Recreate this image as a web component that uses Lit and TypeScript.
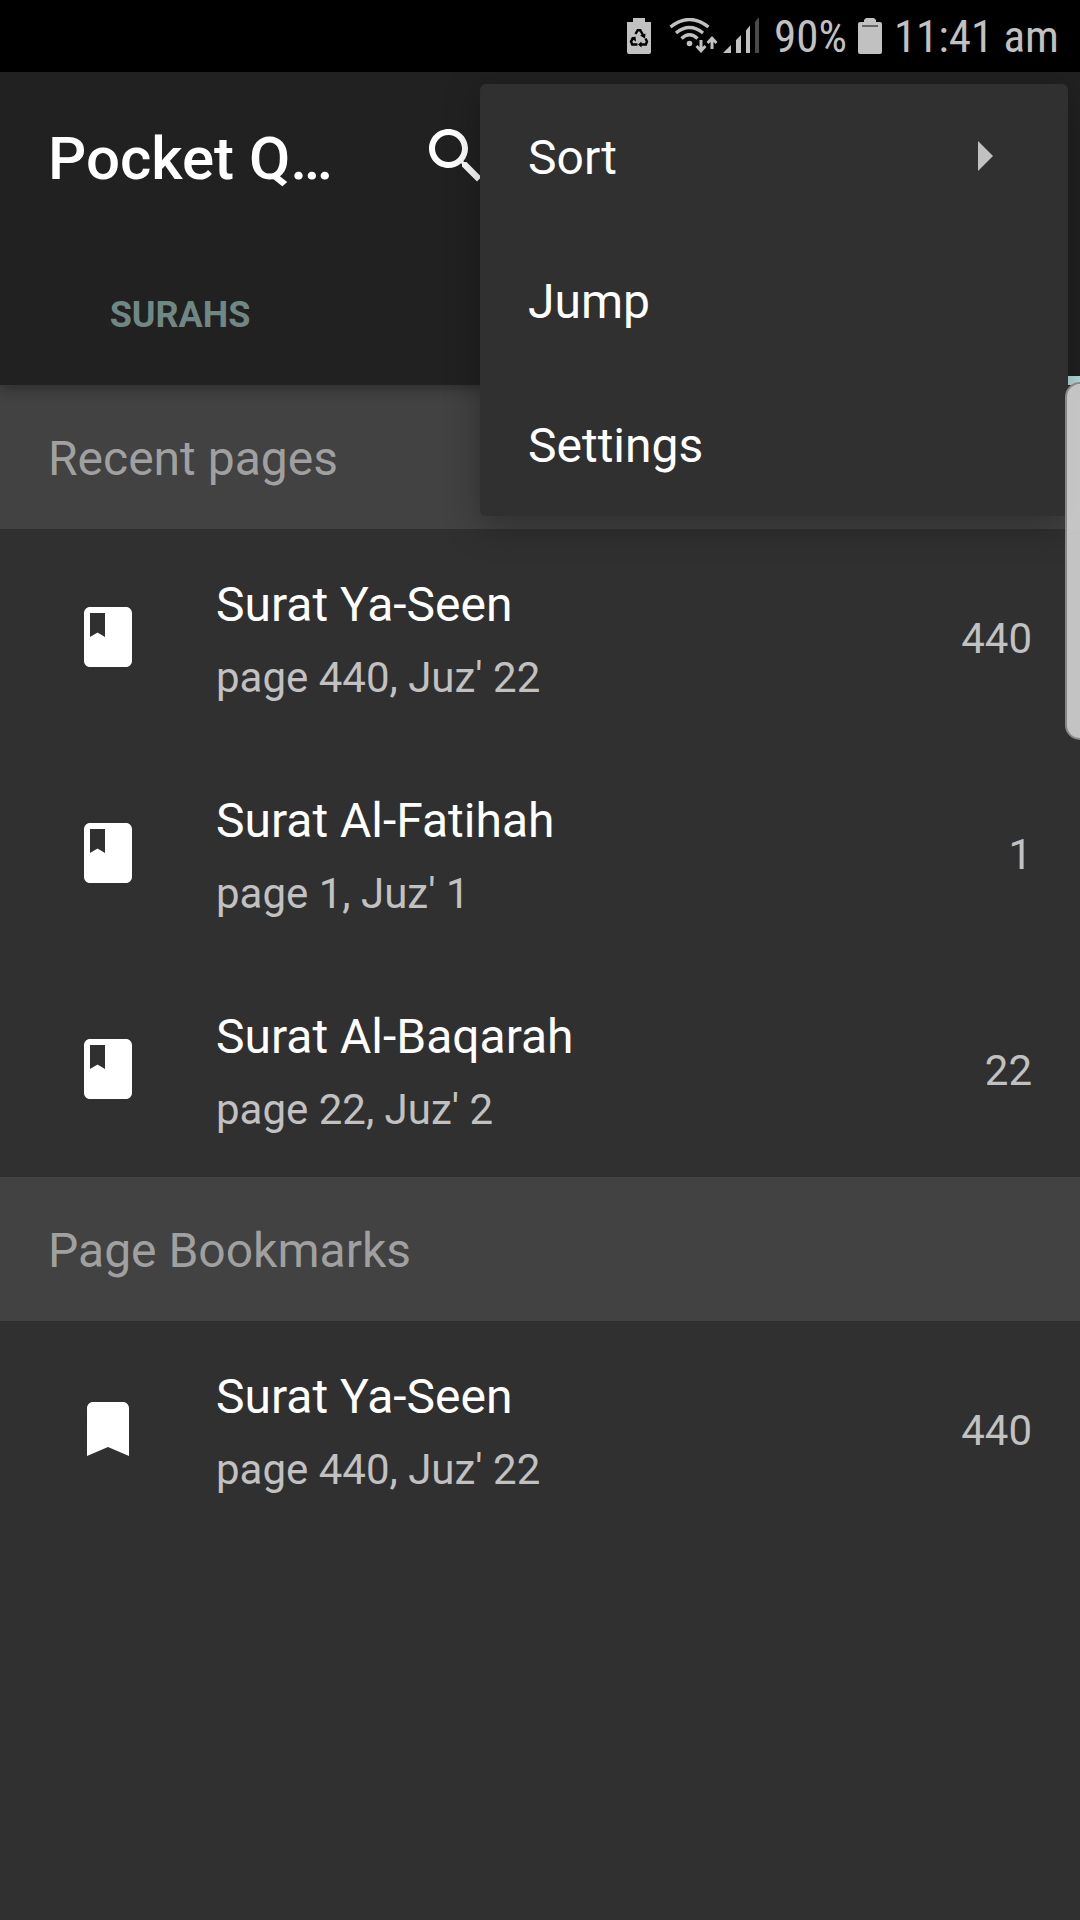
import { LitElement, html, css, svg } from "lit";
import { customElement, property } from "lit/decorators.js";

type Kind = "page" | "bookmark";

interface Entry {
  kind: Kind;
  title: string;
  detail: string;
  page: number;
}

interface Section {
  heading: string;
  entries: Entry[];
}

const SECTIONS: Section[] = [
  {
    heading: "Recent pages",
    entries: [
      { kind: "page", title: "Surat Ya-Seen", detail: "page 440, Juz' 22", page: 440 },
      { kind: "page", title: "Surat Al-Fatihah", detail: "page 1, Juz' 1", page: 1 },
      { kind: "page", title: "Surat Al-Baqarah", detail: "page 22, Juz' 2", page: 22 },
    ],
  },
  {
    heading: "Page Bookmarks",
    entries: [{ kind: "bookmark", title: "Surat Ya-Seen", detail: "page 440, Juz' 22", page: 440 }],
  },
];

const ICONS = {
  page: svg`<path d="M18 2H6c-1.1 0-2 .9-2 2v16c0 1.1.9 2 2 2h12c1.1 0 2-.9 2-2V4c0-1.1-.9-2-2-2zM6 4h5v8l-2.5-1.5L6 12V4z"/>`,
  bookmark: svg`<path d="M17 3H7c-1.1 0-1.99.9-1.99 2L5 21l7-3 7 3V5c0-1.1-.9-2-2-2z"/>`,
  search: svg`<path d="M15.5 14h-.79l-.28-.27C15.41 12.59 16 11.11 16 9.5 16 5.91 13.09 3 9.5 3S3 5.91 3 9.5 5.91 16 9.5 16c1.61 0 3.09-.59 4.23-1.57l.27.28v.79l5 4.99L20.49 19l-4.99-5zm-6 0C7.01 14 5 11.99 5 9.5S7.01 5 9.5 5 14 7.01 14 9.5 11.99 14 9.5 14z"/>`,
  arrow: svg`<path d="M10 17l5-5-5-5v10z"/>`,
};

const icon = (name: keyof typeof ICONS) => html`
  <svg class="icon" viewBox="0 0 24 24" aria-hidden="true">${ICONS[name]}</svg>
`;

const iconStyles = css`
  .icon {
    display: block;
    flex: none;
    width: 72px;
    height: 72px;
    fill: currentColor;
  }
  button {
    border: 0;
    margin: 0;
    padding: 0;
    background: none;
    color: inherit;
    font: inherit;
    text-align: left;
    cursor: pointer;
  }
`;

@customElement("status-bar")
export class StatusBar extends LitElement {
  static styles = css`
    :host {
      display: flex;
      align-items: center;
      justify-content: flex-end;
      height: 72px;
      padding: 0 21px;
      background: #000;
      color: #c1c1c1;
      font-family: "Roboto Condensed", "Liberation Sans Narrow", Roboto, sans-serif;
      font-size: 45px;
      line-height: 68px;
      white-space: nowrap;
    }
    span {
      padding-top: 2px;
    }
    svg {
      display: block;
      flex: none;
      fill: currentColor;
    }
    .saver {
      margin-right: 18px;
    }
    .signal {
      margin-right: 14px;
    }
    .battery {
      margin: 0 12px 0 11px;
    }
  `;

  render() {
    return html`
      <svg class="saver" width="24" height="36" viewBox="0 0 24 36" aria-hidden="true">
        <path d="M6 0h12v4h6v30a2 2 0 0 1-2 2H2a2 2 0 0 1-2-2V4h6z" />
        <g fill="none" stroke="#000" stroke-width="2.4">
          <path d="M8.5 16l2.2-3.800h2.600l2.700 4.800" />
          <path d="M18.500 20.500l1.500 3-1.200 3H14" />
          <path d="M10.500 26.500H5.200L4 23.500l2.600-4" />
        </g>
        <path d="M13 17.500l5.500-2-.5 5zM14.500 23.500v6l-3.500-3zM3.500 20l5-1.500.5 5z" fill="#000" />
      </svg>
      <svg class="signal" width="91" height="36" viewBox="0 0 91 36" aria-hidden="true">
        <g fill="none" stroke="currentColor" stroke-width="3.4">
          <path d="M1.500 9Q20.500-6 39.500 9" />
          <path d="M7 15Q20.500 4 34 15" />
          <path d="M12.500 20.500Q20.500 13 28.500 20.500" />
        </g>
        <circle cx="20.500" cy="25.500" r="2.8" />
        <path d="M30.500 22h3v7l2-2 2 2-5.500 6-5.500-6 2-2 2 2zM41.500 31h3v-7l2 2 2-2-5.500-6-5.500 6 2 2 2-2z" />
        <path d="M54 35l8-8v8zM67 22l5-5v18h-5zM77 12.500l4-5V35h-4z" />
        <path d="M86 4l4-5V35h-4z" fill="#4a4a4a" />
      </svg>
      <span>90%</span>
      <svg class="battery" width="24" height="36" viewBox="0 0 24 36" aria-hidden="true">
        <path d="M8 0h8l2 2v2h4a2 2 0 0 1 2 2v28a2 2 0 0 1-2 2H2a2 2 0 0 1-2-2V6a2 2 0 0 1 2-2h4V2z" />
        <path d="M4 7h16v2H4z" fill="#666" />
      </svg>
      <span>11:41 am</span>
    `;
  }
}

@customElement("page-entry")
export class PageEntry extends LitElement {
  @property({ attribute: false }) entry!: Entry;

  static styles = [
    iconStyles,
    css`
      :host {
        display: block;
      }
      .row {
        display: flex;
        align-items: center;
        width: 100%;
        min-height: 216px;
        padding: 0 48px 0 72px;
      }
      .text {
        display: flex;
        flex: 1;
        flex-direction: column;
        min-width: 0;
        padding: 8px 0 0 72px;
      }
      .title {
        font-size: 48px;
        line-height: 74px;
        color: #fff;
      }
      .detail,
      .page {
        font-size: 42px;
        line-height: 72px;
        color: #c1c1c1;
      }
      .page {
        padding-top: 4px;
      }
    `,
  ];

  render() {
    const { kind, title, detail, page } = this.entry;
    return html`
      <button class="row" type="button">
        ${icon(kind)}
        <span class="text">
          <span class="title">${title}</span>
          <span class="detail">${detail}</span>
        </span>
        <span class="page">${page}</span>
      </button>
    `;
  }
}

@customElement("overflow-menu")
export class OverflowMenu extends LitElement {
  static styles = [
    iconStyles,
    css`
      :host {
        display: block;
        border-radius: 6px;
        background: #303030;
        box-shadow: 0 10px 36px rgba(0, 0, 0, 0.3);
        color: #fff;
      }
      .item {
        display: flex;
        align-items: center;
        justify-content: space-between;
        width: 100%;
        height: 144px;
        padding: 0 48px;
        font-size: 48px;
        line-height: 56px;
      }
      .label {
        padding-top: 4px;
      }
      .icon {
        color: #c1c1c1;
      }
    `,
  ];

  render() {
    return html`
      <div role="menu">
        <button class="item" type="button" role="menuitem" aria-haspopup="true">
          <span class="label">Sort</span>${icon("arrow")}
        </button>
        <button class="item" type="button" role="menuitem"><span class="label">Jump</span></button>
        <button class="item" type="button" role="menuitem"><span class="label">Settings</span></button>
      </div>
    `;
  }
}

@customElement("app-root")
export class AppRoot extends LitElement {
  static styles = [
    iconStyles,
    css`
      :host {
        display: block;
        position: relative;
        min-height: 100vh;
        background: #303030;
        font-family: Roboto, sans-serif;
        color: #fff;
        overflow: hidden;
      }
      .appbar {
        position: relative;
        background: #212121;
        box-shadow: 0 4px 12px rgba(0, 0, 0, 0.3);
      }
      .toolbar {
        display: flex;
        align-items: center;
        height: 168px;
        padding-left: 48px;
      }
      .brand {
        flex: 0 1 336px;
        margin: 0;
        padding-top: 5px;
        font-size: 60px;
        font-weight: 500;
        line-height: 72px;
        white-space: nowrap;
      }
      .search {
        display: flex;
        justify-content: center;
        width: 144px;
      }
      .tabs {
        display: grid;
        grid-template-columns: repeat(3, 1fr);
        height: 145px;
      }
      .tab {
        display: flex;
        align-items: center;
        justify-content: center;
        padding-top: 4px;
        font-size: 36px;
        font-weight: 700;
        color: #6f8884;
      }
      .current {
        grid-column: 3;
        border-bottom: 9px solid #b8dfdc;
      }
      .heading {
        margin: 0;
        padding: 46px 48px 42px;
        background: #424242;
        color: #a0a0a0;
        font-size: 48px;
        font-weight: 400;
        line-height: 56px;
      }
      .list {
        margin: 0;
        padding: 0;
        list-style: none;
      }
      .menu {
        position: absolute;
        top: 84px;
        right: 12px;
        width: 588px;
      }
      .edge {
        position: absolute;
        top: 382px;
        right: 0;
        width: 13px;
        height: 354px;
        border: 2px solid rgba(130, 130, 130, 0.9);
        border-right: 0;
        border-radius: 16px 0 0 16px;
        background: rgba(212, 212, 212, 0.9);
      }
    `,
  ];

  render() {
    return html`
      <status-bar></status-bar>
      <header class="appbar">
        <div class="toolbar">
          <h1 class="brand">Pocket Q…</h1>
          <button class="search" type="button" aria-label="Search">${icon("search")}</button>
        </div>
        <nav class="tabs">
          <button class="tab" type="button">SURAHS</button>
          <span class="current"></span>
        </nav>
      </header>
      <main>
        ${SECTIONS.map(
          (section) => html`
            <section>
              <h2 class="heading">${section.heading}</h2>
              <ul class="list">
                ${section.entries.map((entry) => html`<li><page-entry .entry=${entry}></page-entry></li>`)}
              </ul>
            </section>
          `,
        )}
      </main>
      <overflow-menu class="menu"></overflow-menu>
      <div class="edge"></div>
    `;
  }
}
